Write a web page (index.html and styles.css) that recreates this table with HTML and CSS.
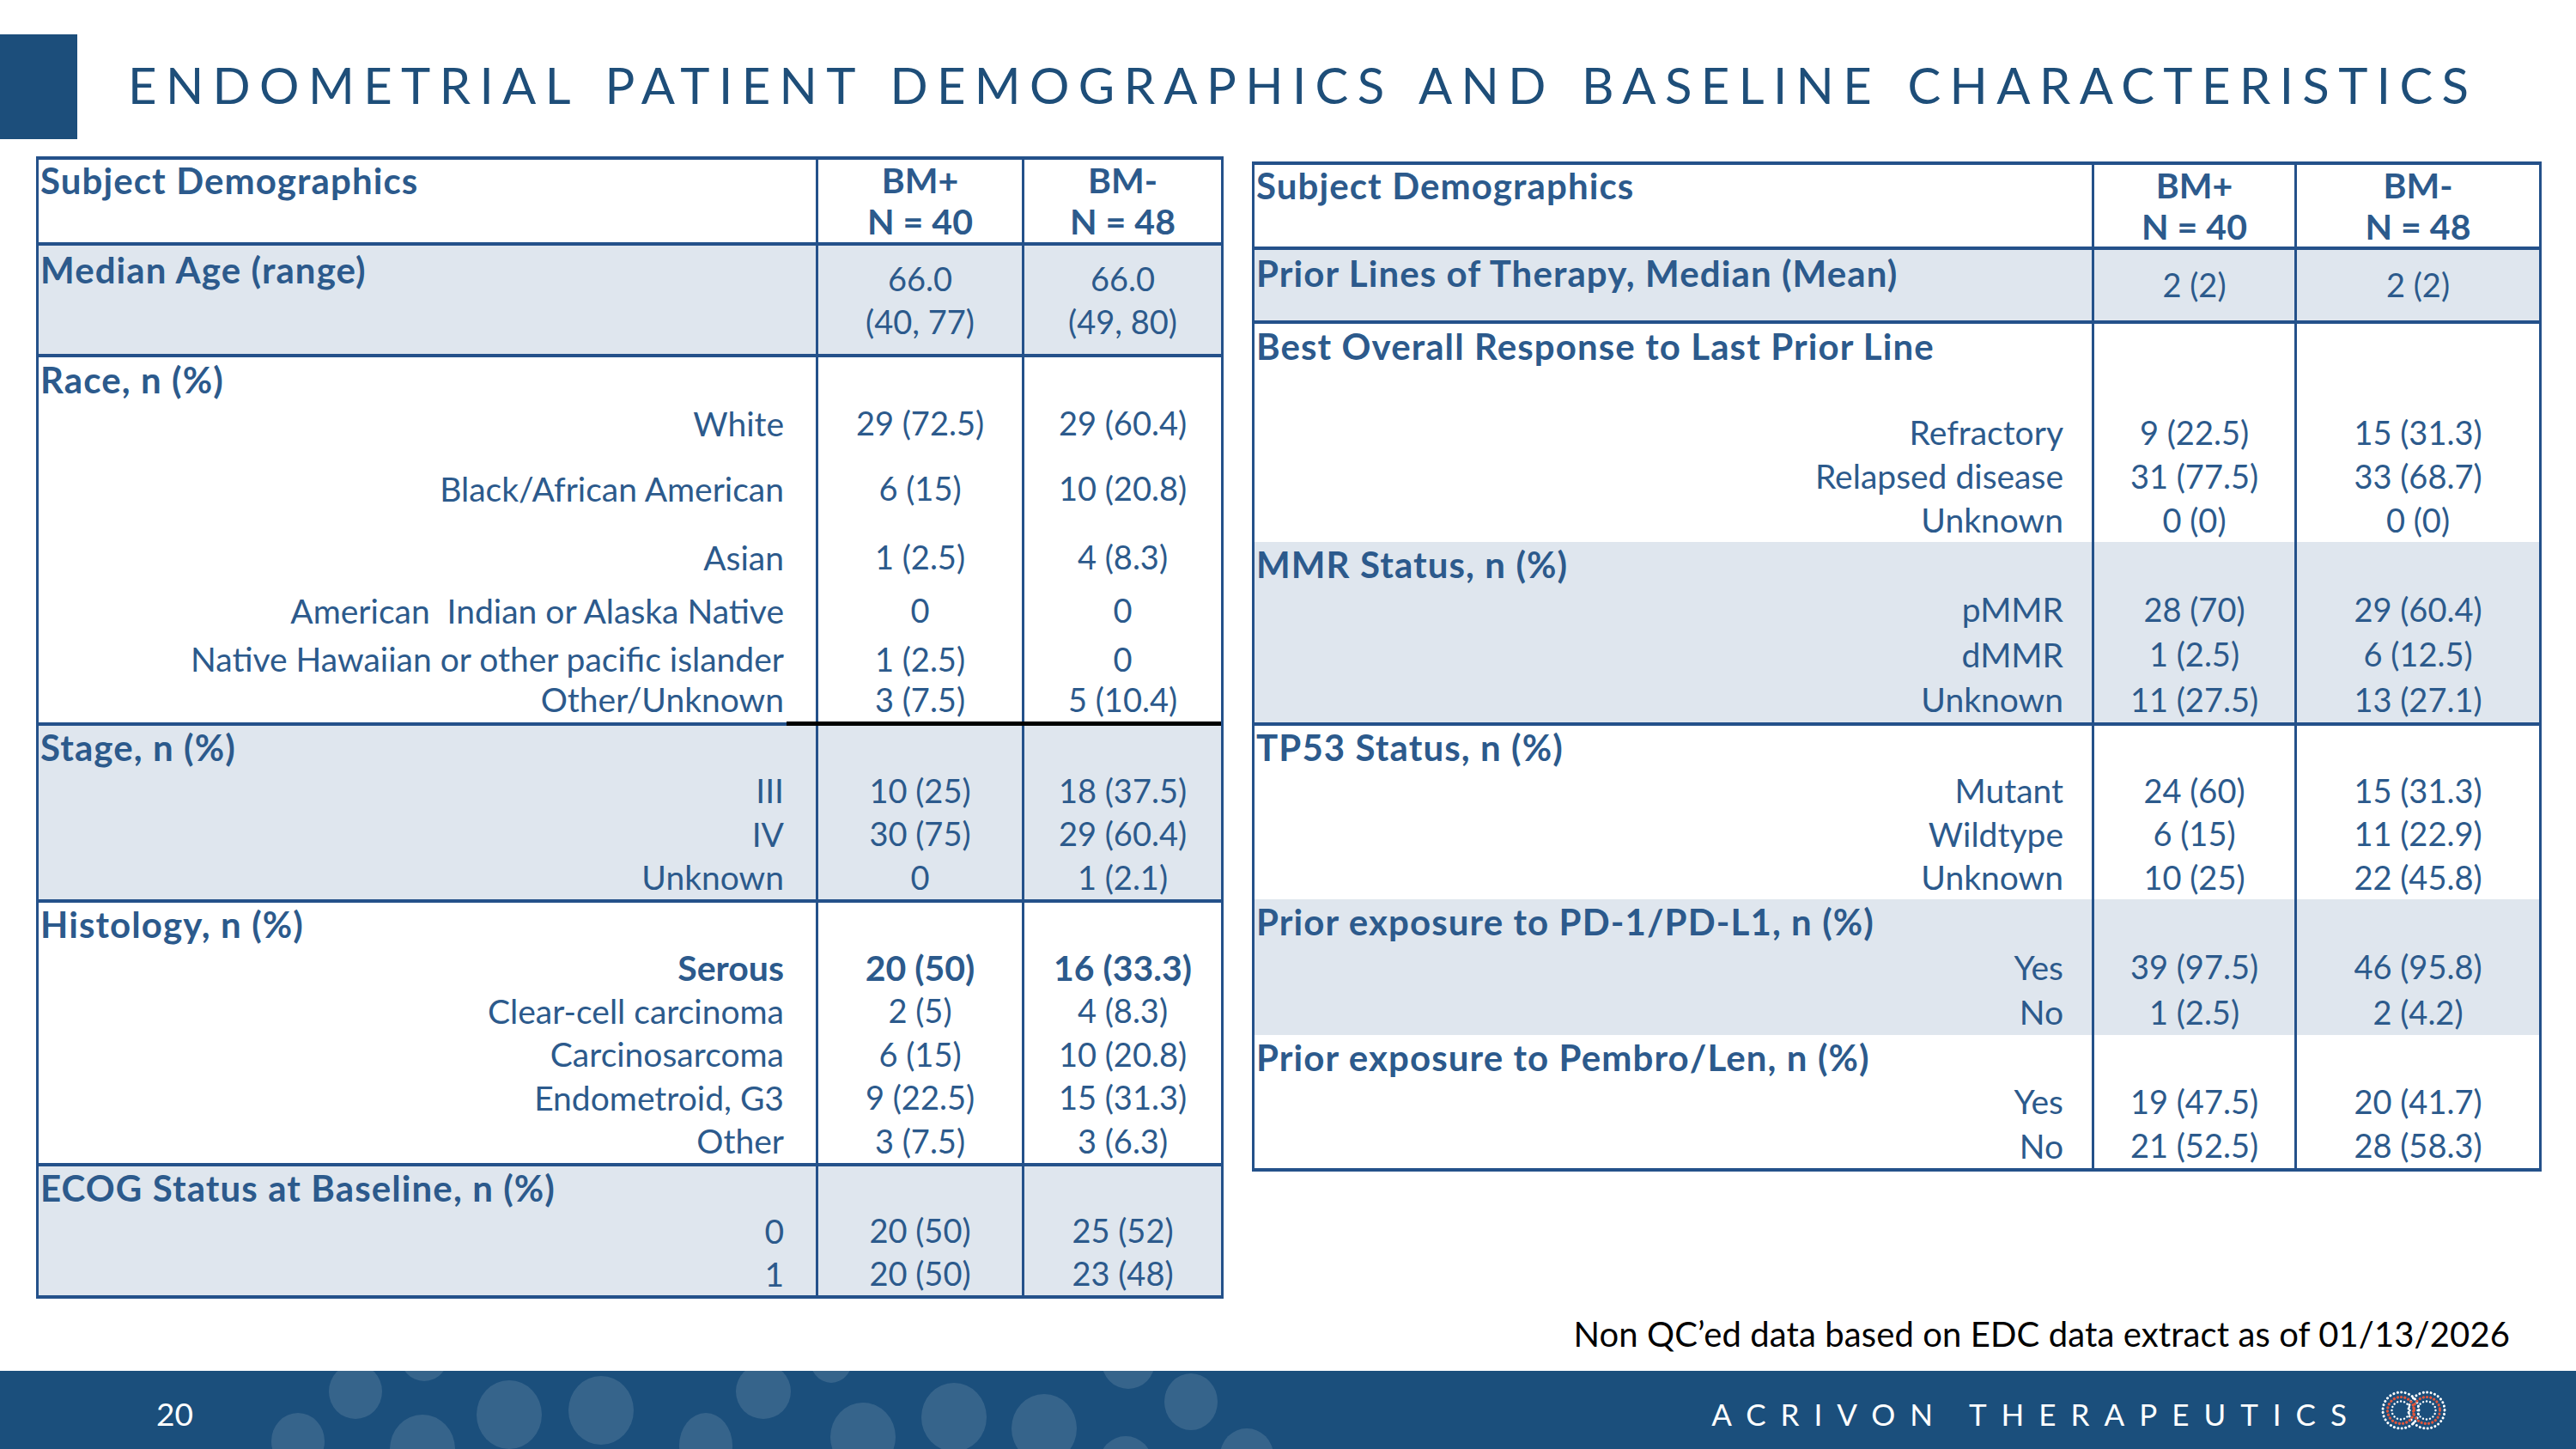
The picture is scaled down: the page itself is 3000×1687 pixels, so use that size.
FILE: index.html
```html
<!DOCTYPE html>
<html lang="en">
<head>
<meta charset="utf-8">
<title>Endometrial Patient Demographics</title>
<link rel="stylesheet" href="styles.css">
</head>
<body>
<div class="slide">
  <div class="top">
    <div class="mark"></div>
    <h1 class="title">ENDOMETRIAL PATIENT DEMOGRAPHICS AND BASELINE CHARACTERISTICS</h1>
  </div>

  <div class="content">
    <div class="tbl tbl-l">
      <div class="grp">
        <div class="r h96">
          <div class="c h topal lh48">Subject Demographics</div>
          <div class="c v b lh48">BM+<br>N = 40</div>
          <div class="c v b lh48">BM-<br>N = 48</div>
        </div>
      </div>
      <div class="grp shade">
        <div class="r h126">
          <div class="c h topal lh50 pt3">Median Age (range)</div>
          <div class="c v lh50">66.0<br>(40, 77)</div>
          <div class="c v lh50">66.0<br>(49, 80)</div>
        </div>
      </div>
      <div class="grp">
        <div class="r h52"><div class="c h">Race, n (%)</div><div class="c v"></div><div class="c v"></div></div>
        <div class="r h50"><div class="c sub">White</div><div class="c v">29 (72.5)</div><div class="c v">29 (60.4)</div></div>
        <div class="r h102"><div class="c sub">Black/African American</div><div class="c v">6 (15)</div><div class="c v">10 (20.8)</div></div>
        <div class="r h58"><div class="c sub">Asian</div><div class="c v">1 (2.5)</div><div class="c v">4 (8.3)</div></div>
        <div class="r h66"><div class="c sub">American&nbsp; Indian or Alaska Native</div><div class="c v">0</div><div class="c v">0</div></div>
        <div class="r h44"><div class="c sub">Native Hawaiian or other pacific islander</div><div class="c v">1 (2.5)</div><div class="c v">0</div></div>
        <div class="r h53 blk"><div class="c sub">Other/Unknown</div><div class="c v">3 (7.5)</div><div class="c v">5 (10.4)</div></div>
      </div>
      <div class="grp shade">
        <div class="r h505"><div class="c h">Stage, n (%)</div><div class="c v"></div><div class="c v"></div></div>
        <div class="r h505"><div class="c sub">III</div><div class="c v">10 (25)</div><div class="c v">18 (37.5)</div></div>
        <div class="r h505"><div class="c sub">IV</div><div class="c v">30 (75)</div><div class="c v">29 (60.4)</div></div>
        <div class="r h505"><div class="c sub">Unknown</div><div class="c v">0</div><div class="c v">1 (2.1)</div></div>
      </div>
      <div class="grp">
        <div class="r h505"><div class="c h">Histology, n (%)</div><div class="c v"></div><div class="c v"></div></div>
        <div class="r h505"><div class="c sub b">Serous</div><div class="c v b">20 (50)</div><div class="c v b">16 (33.3)</div></div>
        <div class="r h505"><div class="c sub">Clear-cell carcinoma</div><div class="c v">2 (5)</div><div class="c v">4 (8.3)</div></div>
        <div class="r h505"><div class="c sub">Carcinosarcoma</div><div class="c v">6 (15)</div><div class="c v">10 (20.8)</div></div>
        <div class="r h505"><div class="c sub">Endometroid, G3</div><div class="c v">9 (22.5)</div><div class="c v">15 (31.3)</div></div>
        <div class="r h505"><div class="c sub">Other</div><div class="c v">3 (7.5)</div><div class="c v">3 (6.3)</div></div>
      </div>
      <div class="grp shade">
        <div class="r h50"><div class="c h">ECOG Status at Baseline, n (%)</div><div class="c v"></div><div class="c v"></div></div>
        <div class="r h50"><div class="c sub">0</div><div class="c v">20 (50)</div><div class="c v">25 (52)</div></div>
        <div class="r h50"><div class="c sub">1</div><div class="c v">20 (50)</div><div class="c v">23 (48)</div></div>
      </div>
    </div>

    <div class="tbl tbl-r">
      <div class="grp">
        <div class="r h95">
          <div class="c h topal lh48">Subject Demographics</div>
          <div class="c v b lh48">BM+<br>N = 40</div>
          <div class="c v b lh48">BM-<br>N = 48</div>
        </div>
      </div>
      <div class="grp shade">
        <div class="r h82">
          <div class="c h topal lh50 pt2">Prior Lines of Therapy, Median (Mean)</div>
          <div class="c v">2 (2)</div>
          <div class="c v">2 (2)</div>
        </div>
      </div>
      <div class="grp nb">
        <div class="r h101"><div class="c h topal lh53">Best Overall Response to Last Prior Line</div><div class="c v"></div><div class="c v"></div></div>
        <div class="r h51"><div class="c sub">Refractory</div><div class="c v">9 (22.5)</div><div class="c v">15 (31.3)</div></div>
        <div class="r h51"><div class="c sub">Relapsed disease</div><div class="c v">31 (77.5)</div><div class="c v">33 (68.7)</div></div>
        <div class="r h51"><div class="c sub">Unknown</div><div class="c v">0 (0)</div><div class="c v">0 (0)</div></div>
      </div>
      <div class="grp shade">
        <div class="r h525"><div class="c h">MMR Status, n (%)</div><div class="c v"></div><div class="c v"></div></div>
        <div class="r h525"><div class="c sub">pMMR</div><div class="c v">28 (70)</div><div class="c v">29 (60.4)</div></div>
        <div class="r h525"><div class="c sub">dMMR</div><div class="c v">1 (2.5)</div><div class="c v">6 (12.5)</div></div>
        <div class="r h525"><div class="c sub">Unknown</div><div class="c v">11 (27.5)</div><div class="c v">13 (27.1)</div></div>
      </div>
      <div class="grp nb">
        <div class="r h505"><div class="c h">TP53 Status, n (%)</div><div class="c v"></div><div class="c v"></div></div>
        <div class="r h505"><div class="c sub">Mutant</div><div class="c v">24 (60)</div><div class="c v">15 (31.3)</div></div>
        <div class="r h505"><div class="c sub">Wildtype</div><div class="c v">6 (15)</div><div class="c v">11 (22.9)</div></div>
        <div class="r h505"><div class="c sub">Unknown</div><div class="c v">10 (25)</div><div class="c v">22 (45.8)</div></div>
      </div>
      <div class="grp nb shade">
        <div class="r h527"><div class="c h">Prior exposure to PD-1/PD-L1, n (%)</div><div class="c v"></div><div class="c v"></div></div>
        <div class="r h527"><div class="c sub">Yes</div><div class="c v">39 (97.5)</div><div class="c v">46 (95.8)</div></div>
        <div class="r h527"><div class="c sub">No</div><div class="c v">1 (2.5)</div><div class="c v">2 (4.2)</div></div>
      </div>
      <div class="grp">
        <div class="r h517"><div class="c h">Prior exposure to Pembro/Len, n (%)</div><div class="c v"></div><div class="c v"></div></div>
        <div class="r h517"><div class="c sub">Yes</div><div class="c v">19 (47.5)</div><div class="c v">20 (41.7)</div></div>
        <div class="r h517"><div class="c sub">No</div><div class="c v">21 (52.5)</div><div class="c v">28 (58.3)</div></div>
      </div>
    </div>
  </div>

  <p class="note">Non QC’ed data based on EDC data extract as of 01/13/2026</p>

  <footer class="footer">
    <svg class="dots" width="3000" height="91" viewBox="0 0 3000 91" aria-hidden="true">
      <g fill="#ffffff" fill-opacity="0.12">
        <ellipse cx="347" cy="82" rx="31" ry="33"/>
        <ellipse cx="414" cy="24" rx="31" ry="32"/>
        <ellipse cx="494" cy="-20" rx="29" ry="32"/>
        <ellipse cx="492" cy="91" rx="38" ry="40"/>
        <ellipse cx="593" cy="51" rx="38" ry="40"/>
        <ellipse cx="700" cy="46" rx="38" ry="40"/>
        <ellipse cx="822" cy="87" rx="31" ry="38"/>
        <ellipse cx="889" cy="24" rx="32" ry="32"/>
        <ellipse cx="968" cy="-18" rx="26" ry="32"/>
        <ellipse cx="1005" cy="77" rx="38" ry="40"/>
        <ellipse cx="1111" cy="54" rx="38" ry="40"/>
        <ellipse cx="1216" cy="67" rx="38" ry="40"/>
        <ellipse cx="1314" cy="-11" rx="31" ry="32"/>
        <ellipse cx="1387" cy="36" rx="31" ry="33"/>
        <ellipse cx="1311" cy="108" rx="31" ry="32"/>
        <ellipse cx="1452" cy="99" rx="31" ry="32"/>
      </g>
    </svg>
    <span class="pgnum">20</span>
    <div class="brand">
      <span class="brand-name">ACRIVON THERAPEUTICS</span>
      <svg class="logo" width="78" height="48" viewBox="0 0 78 48" aria-hidden="true">
        <g fill="none" stroke-linecap="round">
          <circle cx="24" cy="24" r="21" stroke="#ffffff" stroke-width="3" stroke-dasharray="0.1 4.4"/>
          <circle cx="54" cy="24" r="21" stroke="#ffffff" stroke-width="3" stroke-dasharray="0.1 4.4"/>
          <circle cx="24" cy="24" r="15.5" stroke="#e0563c" stroke-width="3.2" stroke-dasharray="0.1 4.2"/>
          <circle cx="54" cy="24" r="15.5" stroke="#e0563c" stroke-width="3.2" stroke-dasharray="0.1 4.2"/>
          <circle cx="24" cy="24" r="10.5" stroke="#ffffff" stroke-width="2.4" stroke-dasharray="0.1 4"/>
          <circle cx="54" cy="24" r="10.5" stroke="#ffffff" stroke-width="2.4" stroke-dasharray="0.1 4"/>
        </g>
      </svg>
    </div>
  </footer>
</div>
</body>
</html>
```
FILE: styles.css
```css
* { box-sizing: border-box; margin: 0; padding: 0; }
html, body { width: 3000px; height: 1687px; overflow: hidden; background: #ffffff; }
body { font-family: "Lato", "Open Sans", "DejaVu Sans", sans-serif; color: #2c5a8c; }

.slide { width: 3000px; height: 1687px; display: flex; flex-direction: column; }

.top { display: flex; align-items: center; gap: 59px; margin-top: 40px; height: 122px; }
.mark { width: 90px; height: 122px; background: #1c4e7b; flex: none; }
.title { font-size: 58px; font-weight: 400; letter-spacing: 10.4px; word-spacing: 6px; color: #1e4e79; white-space: nowrap; margin-top: -6px; }

.content { display: flex; align-items: flex-start; margin-top: 20px; padding-left: 42px; gap: 33px; }

.tbl { border: 3px solid #24518a; border-top-width: 4px; border-bottom-width: 4px; flex: none; }
.tbl-l { width: 1383px; }
.tbl-r { width: 1502px; margin-top: 6px; }

.grp { border-bottom: 4px solid #24518a; }
.grp.nb, .grp:last-child { border-bottom: 0; }
.shade { background: #dfe6ee; }

.r { display: grid; position: relative; }
.tbl-l .r { grid-template-columns: 905px 240px 232px; }
.tbl-r .r { grid-template-columns: 975px 236px 285px; }

.c { display: flex; align-items: center; font-size: 38px; line-height: 1.2; white-space: nowrap; }
.c.v { justify-content: center; text-align: center; border-left: 3px solid #24518a; }
.c.sub { justify-content: flex-end; padding-right: 37px; font-size: 39px; }
.tbl-r .c.sub { padding-right: 33px; }
.c.h { font-weight: 700; font-size: 42px; letter-spacing: 1.1px; padding-left: 2px; }
.c.b { font-weight: 700; }
.c.v.b { font-size: 41px; }
.c.sub.b { font-size: 41px; }
.topal { align-items: flex-start; }
.lh48 { line-height: 48px; }
.lh50 { line-height: 50px; }
.lh53 { line-height: 53px; }
.pt2 { padding-top: 2px; }
.pt3 { padding-top: 3px; }

.h44 { height: 44px; }
.h50 { height: 50px; }
.h505 { height: 50.5px; }
.h51 { height: 51px; }
.h517 { height: 51.67px; }
.h52 { height: 52px; }
.h525 { height: 52.5px; }
.h527 { height: 52.67px; }
.h53 { height: 53px; }
.h58 { height: 58px; }
.h66 { height: 66px; }
.h82 { height: 82px; }
.h95 { height: 95px; }
.h96 { height: 96px; }
.h101 { height: 101px; }
.h102 { height: 102px; }
.h126 { height: 126px; }

.r.blk::after { content: ""; position: absolute; left: 871px; right: 0; bottom: -4px; height: 5px; background: #000000; }

.note { text-align: right; padding-right: 77px; font-size: 40px; letter-spacing: 0.1px; line-height: 46px; color: #000000; margin-top: 18px; }

.footer { margin-top: auto; height: 91px; background: #1b4f7c; position: relative; overflow: hidden; display: flex; align-items: center; padding-top: 8px; }
.dots { position: absolute; left: 0; top: 0; }
.pgnum { position: relative; margin-left: 182px; font-size: 37px; color: #ffffff; }
.brand { position: relative; margin-left: auto; margin-right: 150px; display: flex; align-items: center; gap: 39px; }
.brand-name { font-size: 35px; letter-spacing: 17px; color: #ffffff; margin-right: -17px; }
.logo { display: block; margin-top: -8px; }
```
